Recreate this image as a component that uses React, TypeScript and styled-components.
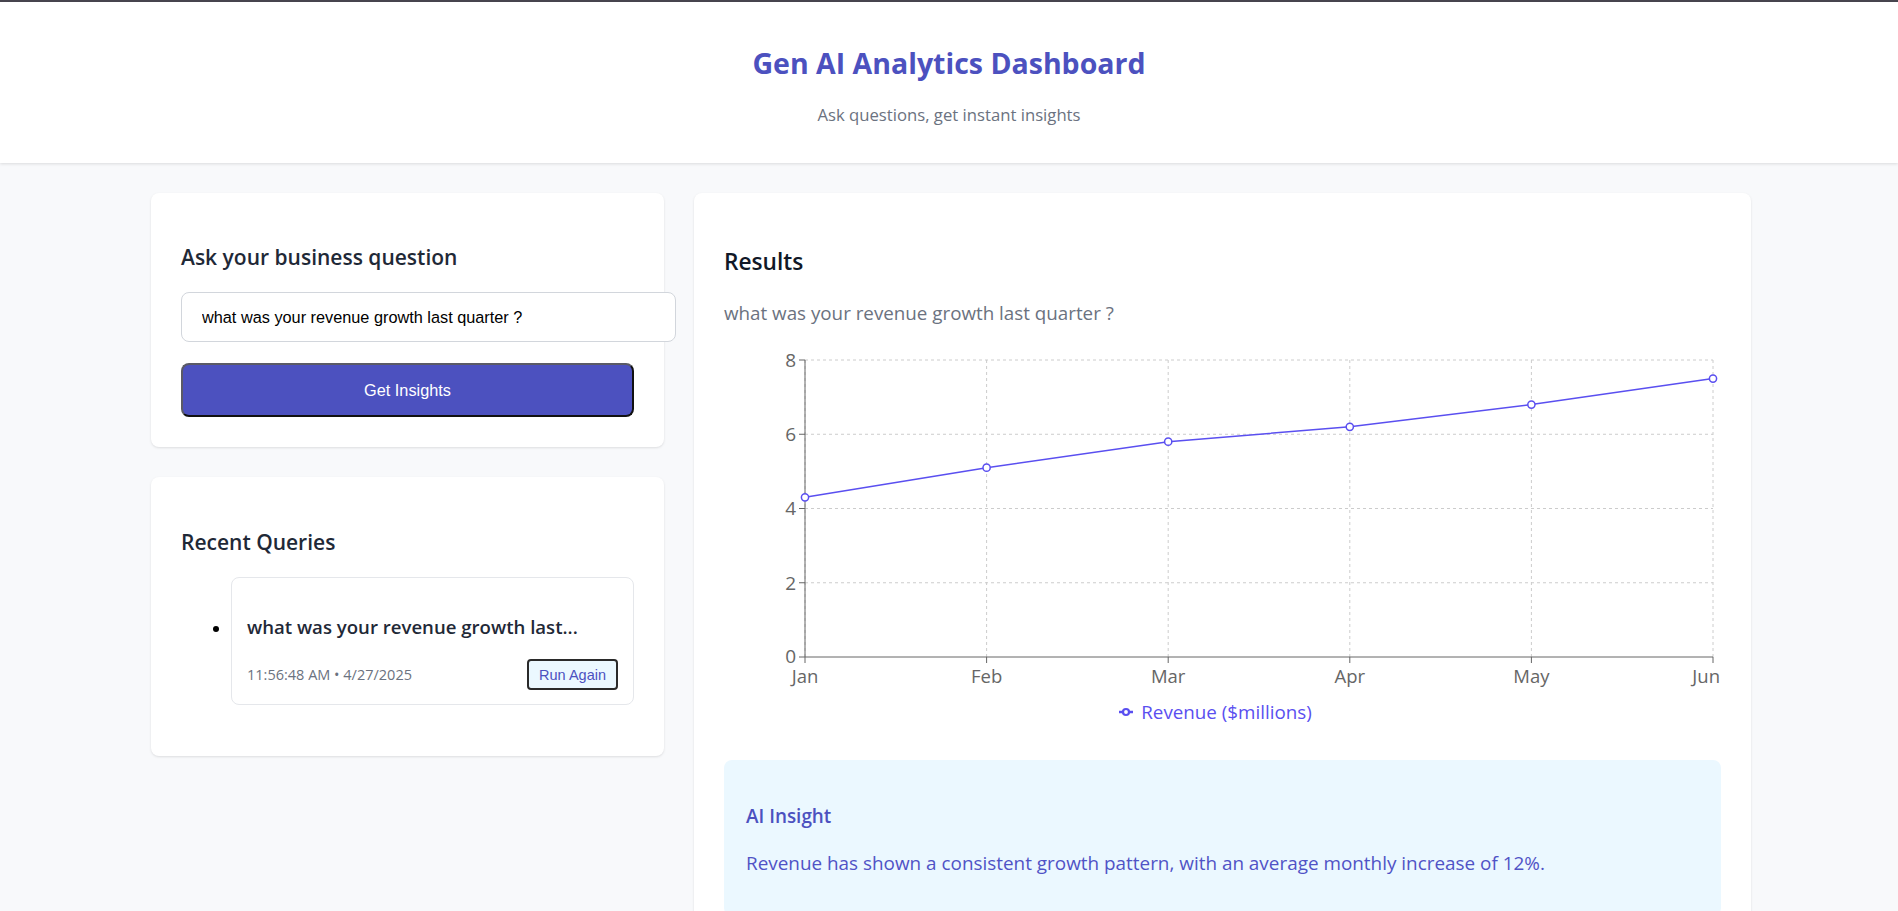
import React from "react";
import styled, { createGlobalStyle } from "styled-components";

const GlobalStyle = createGlobalStyle`
  html, body { margin: 0; padding: 0; }
  body {
    background: #f8f9fb;
    font-family: "Open Sans", "Noto Sans", sans-serif;
    color: #1f2937;
  }
  * { box-sizing: content-box; }
`;

const TopLine = styled.div`
  height: 2px;
  background: #48464f;
`;

const Header = styled.header`
  background: #ffffff;
  box-shadow: 0 1px 3px rgba(0, 0, 0, 0.12);
  padding: 44px 0 36px;
  text-align: center;
  position: relative;
`;

const Title = styled.h1`
  margin: 0;
  font-size: 28.5px;
  line-height: 34px;
  font-weight: 700;
  color: #4c51bf;
`;

const Subtitle = styled.p`
  margin: 23px 0 0;
  font-size: 16.7px;
  line-height: 24px;
  color: #6b7280;
`;

const Main = styled.main`
  max-width: 1604px;
  margin: 0 auto;
  padding: 30px 0 0 4px;
  box-sizing: border-box;
  display: grid;
  grid-template-columns: 513px 1057px;
  column-gap: 30px;
  align-items: start;
`;

const Column = styled.div`
  display: flex;
  flex-direction: column;
  gap: 30px;
`;

const Card = styled.section`
  background: #ffffff;
  border-radius: 8px;
  box-shadow: 0 1px 3px rgba(0, 0, 0, 0.08), 0 1px 2px rgba(0, 0, 0, 0.04);
  padding: 30px;
`;

const CardTitle = styled.h2<{ $top?: number }>`
  margin: ${(p) => p.$top ?? 20}px 0 0;
  font-size: 21px;
  line-height: 28px;
  font-weight: 600;
  color: #1f2937;
`;

const QuestionInput = styled.input`
  display: block;
  width: 100%;
  margin-top: 21px;
  padding: 15px 20px;
  border: 1px solid #d2d6dc;
  border-radius: 8px;
  font-family: "Liberation Sans", Arial, sans-serif;
  font-size: 16.3px;
  line-height: 18px;
  color: #000;
  background: #fff;
  outline: none;
`;

const PrimaryButton = styled.button`
  display: block;
  width: 100%;
  box-sizing: border-box;
  margin-top: 21px;
  height: 54px;
  background: #4c51bf;
  color: #ffffff;
  font-family: "Liberation Sans", Arial, sans-serif;
  font-size: 16.3px;
  border-radius: 8px;
  border: 2px solid;
  border-color: #5a5a66 #111 #111 #5a5a66;
  cursor: pointer;
`;

const QueryList = styled.ul`
  margin: 21px 0 21px;
  padding: 0 0 0 50px;
  list-style: disc;
  font-size: 16px;
`;

const QueryItem = styled.li`
  border: 1px solid #e5e7eb;
  border-radius: 8px;
  padding: 15px 15px 14px;
  &::marker { color: #000; }
`;

const QueryText = styled.p`
  margin: 22px 0 0;
  font-size: 18.6px;
  line-height: 24px;
  font-weight: 600;
  color: #1f2937;
  white-space: nowrap;
`;

const QueryMeta = styled.div`
  margin-top: 20px;
  display: flex;
  align-items: center;
  justify-content: space-between;
`;

const MetaText = styled.span`
  font-size: 14.5px;
  color: #6b7280;
`;

const SmallButton = styled.button`
  height: 31px;
  box-sizing: border-box;
  padding: 0 10px;
  background: #ebf8ff;
  color: #4c51bf;
  font-family: "Liberation Sans", Arial, sans-serif;
  font-size: 14.5px;
  border: 2px solid #2a2a2a;
  border-radius: 4px;
  cursor: pointer;
`;

const ResultsTitle = styled.h2`
  margin: 24px 0 0;
  font-size: 22.7px;
  line-height: 30px;
  font-weight: 600;
  color: #111827;
`;

const QueryEcho = styled.p`
  margin: 23px 0 0;
  font-size: 18.8px;
  line-height: 26px;
  color: #6b7280;
`;

const ChartWrap = styled.div`
  margin-top: 14px;
`;

const ChartSvg = styled.svg`
  display: block;
  width: 100%;
  height: 360px;
  overflow: visible;
  font-family: "Open Sans", "Noto Sans", sans-serif;
`;

const Legend = styled.div`
  display: flex;
  justify-content: center;
  align-items: center;
  gap: 8px;
  height: 24px;
  padding-right: 14px;
  font-size: 18.8px;
  color: #5a4ff0;
`;

const InsightBox = styled.div`
  margin-top: 36px;
  background: #ebf8ff;
  border-radius: 8px;
  padding: 20px 22px 40px;
`;

const InsightTitle = styled.h3`
  margin: 23px 0 0;
  font-size: 18.9px;
  line-height: 26px;
  font-weight: 600;
  color: #4c51bf;
`;

const InsightText = styled.p`
  margin: 21px 0 0;
  font-size: 18.9px;
  line-height: 26px;
  color: #5053c6;
`;

const LINE = "#5a4ff0";
const months = ["Jan", "Feb", "Mar", "Apr", "May", "Jun"];
const values = [4.3, 5.1, 5.8, 6.2, 6.8, 7.5];
const X0 = 81;
const X1 = 989;
const Y0 = 20;
const Y1 = 317;
const xAt = (i: number) => X0 + (i * (X1 - X0)) / 5;
const yAt = (v: number) => Y1 - (v * (Y1 - Y0)) / 8;

function RevenueChart() {
  const pts = values.map((v, i) => `${xAt(i)},${yAt(v)}`).join(" ");
  return (
    <ChartSvg viewBox="0 0 997 360" preserveAspectRatio="xMinYMin meet">
      {[2, 4, 6, 8].map((v) => (
        <line key={"h" + v} x1={X0} x2={X1} y1={yAt(v)} y2={yAt(v)} stroke="#ccc" strokeDasharray="3 3" />
      ))}
      {months.map((m, i) => (
        <line key={"v" + m} x1={xAt(i)} x2={xAt(i)} y1={Y0} y2={Y1} stroke="#ccc" strokeDasharray="3 3" />
      ))}
      <line x1={X0} x2={X0} y1={Y0} y2={Y1} stroke="#666" />
      <line x1={X0} x2={X1} y1={Y1} y2={Y1} stroke="#666" />
      {[0, 2, 4, 6, 8].map((v) => (
        <g key={"y" + v}>
          <line x1={X0 - 6} x2={X0} y1={yAt(v)} y2={yAt(v)} stroke="#666" />
          <text x={X0 - 9} y={yAt(v) - (v === 0 ? 1 : 0)} dy="0.36em" textAnchor="end" fontSize="19" fill="#666">
            {v}
          </text>
        </g>
      ))}
      {months.map((m, i) => (
        <g key={"x" + m}>
          <line x1={xAt(i)} x2={xAt(i)} y1={Y1} y2={Y1 + 6} stroke="#666" />
          <text
            x={i === 5 ? 996 : xAt(i)}
            y={Y1 + 19}
            dy="0.36em"
            textAnchor={i === 5 ? "end" : "middle"}
            fontSize="18.5"
            fill="#666"
          >
            {m}
          </text>
        </g>
      ))}
      <polyline points={pts} fill="none" stroke={LINE} strokeWidth="1.5" />
      {values.map((v, i) => (
        <circle key={"c" + i} cx={xAt(i)} cy={yAt(v)} r="3.6" fill="#fff" stroke={LINE} strokeWidth="1.5" />
      ))}
    </ChartSvg>
  );
}

function LegendIcon() {
  return (
    <svg width="14" height="14" viewBox="0 0 14 14">
      <line x1="0" y1="7" x2="14" y2="7" stroke={LINE} strokeWidth="2.5" />
      <circle cx="7" cy="7" r="3" fill="#fff" stroke={LINE} strokeWidth="2.2" />
    </svg>
  );
}

export default function App() {
  const q = "what was your revenue growth last quarter ?";
  return (
    <>
      <GlobalStyle />
      <TopLine />
      <Header>
        <Title>Gen AI Analytics Dashboard</Title>
        <Subtitle>Ask questions, get instant insights</Subtitle>
      </Header>
      <Main>
        <Column>
          <Card>
            <CardTitle>Ask your business question</CardTitle>
            <QuestionInput defaultValue={q} />
            <PrimaryButton>Get Insights</PrimaryButton>
          </Card>
          <Card>
            <CardTitle $top={21}>Recent Queries</CardTitle>
            <QueryList>
              <QueryItem>
                <QueryText>what was your revenue growth last...</QueryText>
                <QueryMeta>
                  <MetaText>11:56:48 AM • 4/27/2025</MetaText>
                  <SmallButton>Run Again</SmallButton>
                </QueryMeta>
              </QueryItem>
            </QueryList>
          </Card>
        </Column>
        <Card>
          <ResultsTitle>Results</ResultsTitle>
          <QueryEcho>{q}</QueryEcho>
          <ChartWrap>
            <RevenueChart />
            <Legend>
              <LegendIcon />
              <span>Revenue ($millions)</span>
            </Legend>
          </ChartWrap>
          <InsightBox>
            <InsightTitle>AI Insight</InsightTitle>
            <InsightText>
              Revenue has shown a consistent growth pattern, with an average monthly increase of 12%.
            </InsightText>
          </InsightBox>
        </Card>
      </Main>
    </>
  );
}
